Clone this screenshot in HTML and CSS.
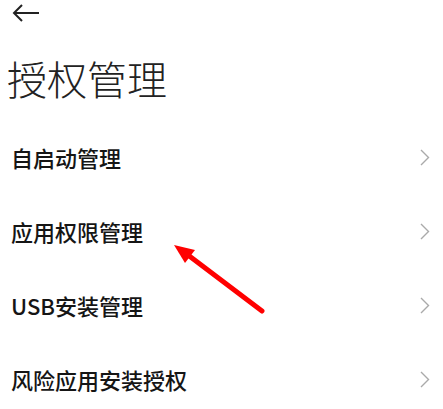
FILE: index.html
```html
<!DOCTYPE html>
<html lang="zh-CN">
<head>
	<meta charset="UTF-8">
	<title>授权管理</title>
<link rel="stylesheet" href="styles.css">
</head>
<body>
<div class="page">
	<div class="top">
		<svg class="back" width="28" height="20" viewBox="0 0 28 20">
			<path d="M27 10H2M10 2L2 10l8 8" fill="none" stroke="#222" stroke-width="2"/>
		</svg>
	</div>
	<h1 class="title">授权管理</h1>
	<ul class="list">
		<li class="item"><span>自启动管理</span><svg class="arr" width="10" height="17" viewBox="0 0 10 17"><path d="M1 1l7.5 7.5L1 16" fill="none" stroke="#aaa" stroke-width="1.4"/></svg></li>
		<li class="item"><span>应用权限管理</span><svg class="arr" width="10" height="17" viewBox="0 0 10 17"><path d="M1 1l7.5 7.5L1 16" fill="none" stroke="#aaa" stroke-width="1.4"/></svg></li>
		<li class="item"><span>USB安装管理</span><svg class="arr" width="10" height="17" viewBox="0 0 10 17"><path d="M1 1l7.5 7.5L1 16" fill="none" stroke="#aaa" stroke-width="1.4"/></svg></li>
		<li class="item"><span>风险应用安装授权</span><svg class="arr" width="10" height="17" viewBox="0 0 10 17"><path d="M1 1l7.5 7.5L1 16" fill="none" stroke="#aaa" stroke-width="1.4"/></svg></li>
	</ul>
	<!-- 标注箭头 -->
	<svg class="mark" width="443" height="409" viewBox="0 0 443 409">
		<line x1="262" y1="311" x2="184" y2="252" stroke="#f00" stroke-width="5" stroke-linecap="round"/>
		<polygon points="174,245 195,250 185,263" fill="#f00"/>
	</svg>
</div>
</body>
</html>
```
FILE: styles.css
```css
html,body,ul,li,h1{
	margin:0;
	padding:0;
}
li{
	list-style:none;
}
body{
	background:#fff;
	font-family:"Noto Sans CJK SC","Noto Sans",sans-serif;
	color:#111;
}
.page{
	position:relative;
	width:443px;
	height:409px;
	overflow:hidden;
}
.top{
	height:26px;
	padding-left:12px;
	display:flex;
	align-items:center;
}
.back{
	display:block;
}
.title{
	font-size:40px;
	font-weight:300;
	line-height:56px;
	margin-top:24px;
	padding-left:7px;
	color:#222;
}
.list{
	margin-top:14px;
}
.item{
	height:74px;
	display:flex;
	align-items:center;
	justify-content:space-between;
	padding:0 13px 0 11px;
	font-size:22px;
	font-weight:500;
	color:#151515;
}
.arr{
	display:block;
}
.mark{
	position:absolute;
	left:0;
	top:0;
}
```
